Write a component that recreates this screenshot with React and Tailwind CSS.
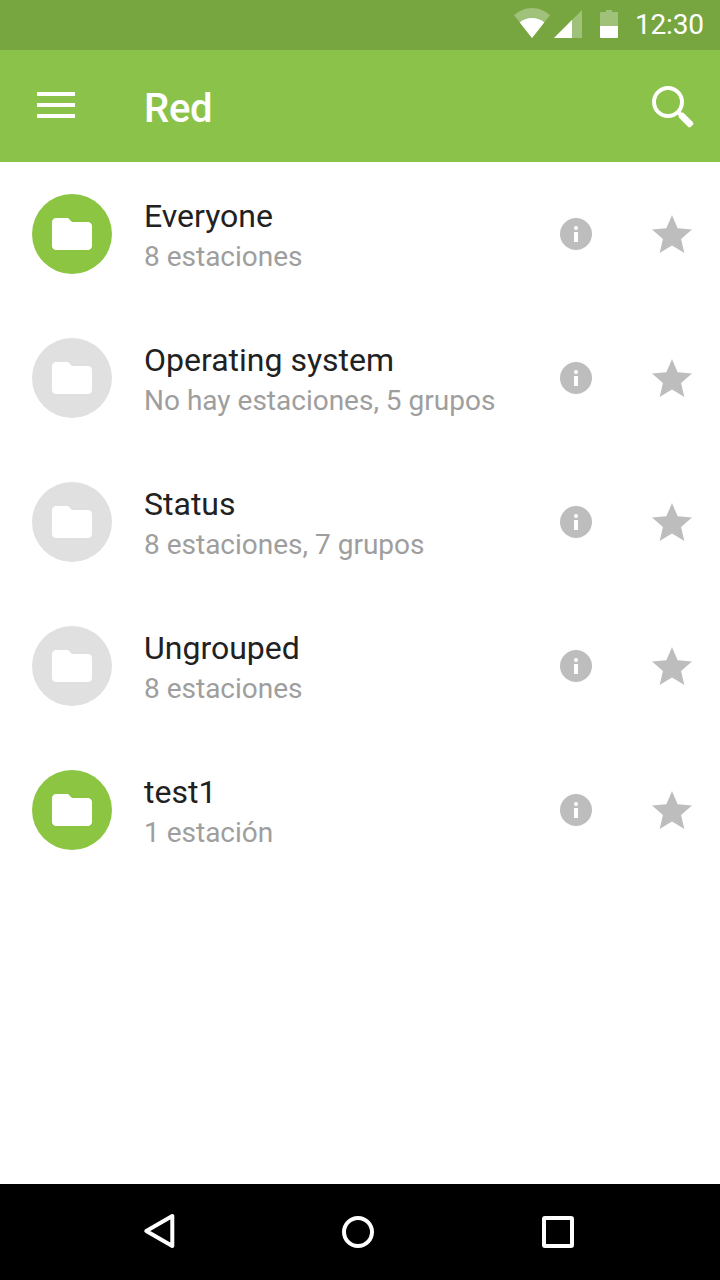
const groups = [
  { name: "Everyone", detail: "8 estaciones", active: true },
  { name: "Operating system", detail: "No hay estaciones, 5 grupos", active: false },
  { name: "Status", detail: "8 estaciones, 7 grupos", active: false },
  { name: "Ungrouped", detail: "8 estaciones", active: false },
  { name: "test1", detail: "1 estación", active: true },
];

const StatusBar = () => {
  return (
    <div className="flex h-[50px] items-center bg-[#77a640] pl-[510px] text-white">
      <svg className="h-[50px] w-[110px] shrink-0" viewBox="510 0 110 50" fill="currentColor">
        {/* wifi */}
        <path d="M532 38 L514 15.2 C519 10.8 525 8 532 8 C539 8 545 10.8 550 15.2 Z" opacity="0.3" />
        <path d="M532 38 L519.8 22.5 C523 19.6 527 18 532 18 C537 18 541 19.6 544.2 22.5 Z" />
        {/* signal */}
        <path d="M582 10 V38 H554 Z" opacity="0.3" />
        <path d="M572 20 V38 H554 Z" />
        {/* battery */}
        <path d="M606 10 H612 V12 H617 Q618 12 618 13 V26 H600 V13 Q600 12 601 12 H606 Z" opacity="0.3" />
        <path d="M600 26 H618 V37 Q618 38 617 38 H601 Q600 38 600 37 Z" />
      </svg>
      <span className="ml-[15px] text-[28px] leading-8 tracking-[-0.2px]">12:30</span>
    </div>
  );
};

const AppBar = () => {
  return (
    <header className="flex h-28 items-center bg-[#8bc34a] text-white">
      <button className="ml-[37px] mb-[2px] flex w-[38px] flex-col gap-[7px]" aria-label="Menu">
        <span className="h-1 w-full bg-white" />
        <span className="h-1 w-full bg-white" />
        <span className="h-1 w-full bg-white" />
      </button>
      <h1 className="ml-[69px] mt-1.5 flex-1 text-[40px] leading-[48px] font-medium tracking-[-0.3px]">Red</h1>
      <button className="mr-6" aria-label="Buscar">
        <svg className="h-12 w-12" viewBox="0 0 48 48" fill="none" stroke="currentColor">
          <circle cx="20" cy="20" r="14" strokeWidth="4" />
          <path d="M29.5 29.5 L34 34" strokeWidth="4" />
          <rect
            x="45.5"
            y="-3.3"
            width="16.5"
            height="6.6"
            rx="2"
            fill="currentColor"
            stroke="none"
            transform="rotate(45)"
          />
        </svg>
      </button>
    </header>
  );
};

const GroupRow = ({ group }) => {
  return (
    <li className="flex h-36 items-center pl-8">
      <div
        className={`flex h-20 w-20 items-center justify-center rounded-full text-white ${
          group.active ? "bg-[#8bc541]" : "bg-[#e0e0e0]"
        }`}
      >
        <svg className="h-12 w-12" viewBox="0 0 24 24" fill="currentColor">
          <path d="M10 4H4c-1.1 0-1.99.9-1.99 2L2 18c0 1.1.9 2 2 2h16c1.1 0 2-.9 2-2V8c0-1.1-.9-2-2-2h-8l-2-2z" />
        </svg>
      </div>
      <div className="ml-8 mt-1.5 flex-1">
        <p className="text-[32px] leading-10 text-[#212121]">{group.name}</p>
        <p className="text-[28px] leading-[42px] text-[#9e9e9e]">{group.detail}</p>
      </div>
      <button className="text-[#bdbdbd]" aria-label="Info">
        <svg className="h-8 w-8" viewBox="0 0 32 32" fill="currentColor">
          <circle cx="16" cy="16" r="16" />
          <circle cx="16" cy="10" r="2" fill="white" />
          <path d="M14 14h4v10h-4z" fill="white" />
        </svg>
      </button>
      <button className="ml-14 mt-0.5 mr-6 text-[#bdbdbd]" aria-label="Favorito">
        <svg className="h-12 w-12" viewBox="0 0 24 24" fill="currentColor">
          <path d="M12 17.27L18.18 21l-1.64-7.03L22 9.24l-7.19-.61L12 2 9.19 8.63 2 9.24l5.46 4.73L5.82 21z" />
        </svg>
      </button>
    </li>
  );
};

const NavigationBar = () => {
  return (
    <nav className="flex h-24 items-center bg-black pl-[142px] text-white">
      <svg className="h-10 w-9" viewBox="0 0 36 40" fill="none" stroke="currentColor" strokeWidth="4">
        <path d="M30.3 4 V34 L4.3 19 Z" strokeLinejoin="round" />
      </svg>
      <svg className="ml-[162px] h-9 w-9" viewBox="0 0 36 36" fill="none" stroke="currentColor" strokeWidth="4">
        <circle cx="18" cy="18" r="14" />
      </svg>
      <svg className="ml-[164px] h-9 w-9" viewBox="0 0 36 36" fill="none" stroke="currentColor" strokeWidth="4">
        <rect x="4" y="4" width="28" height="28" rx="1" />
      </svg>
    </nav>
  );
};

const App = () => {
  return (
    <div className="flex h-[1280px] w-[720px] flex-col bg-white font-[Roboto,sans-serif]">
      <StatusBar />
      <AppBar />
      <ul className="flex-1">
        {groups.map((group) => (
          <GroupRow key={group.name} group={group} />
        ))}
      </ul>
      <NavigationBar />
    </div>
  );
};

export default App;
